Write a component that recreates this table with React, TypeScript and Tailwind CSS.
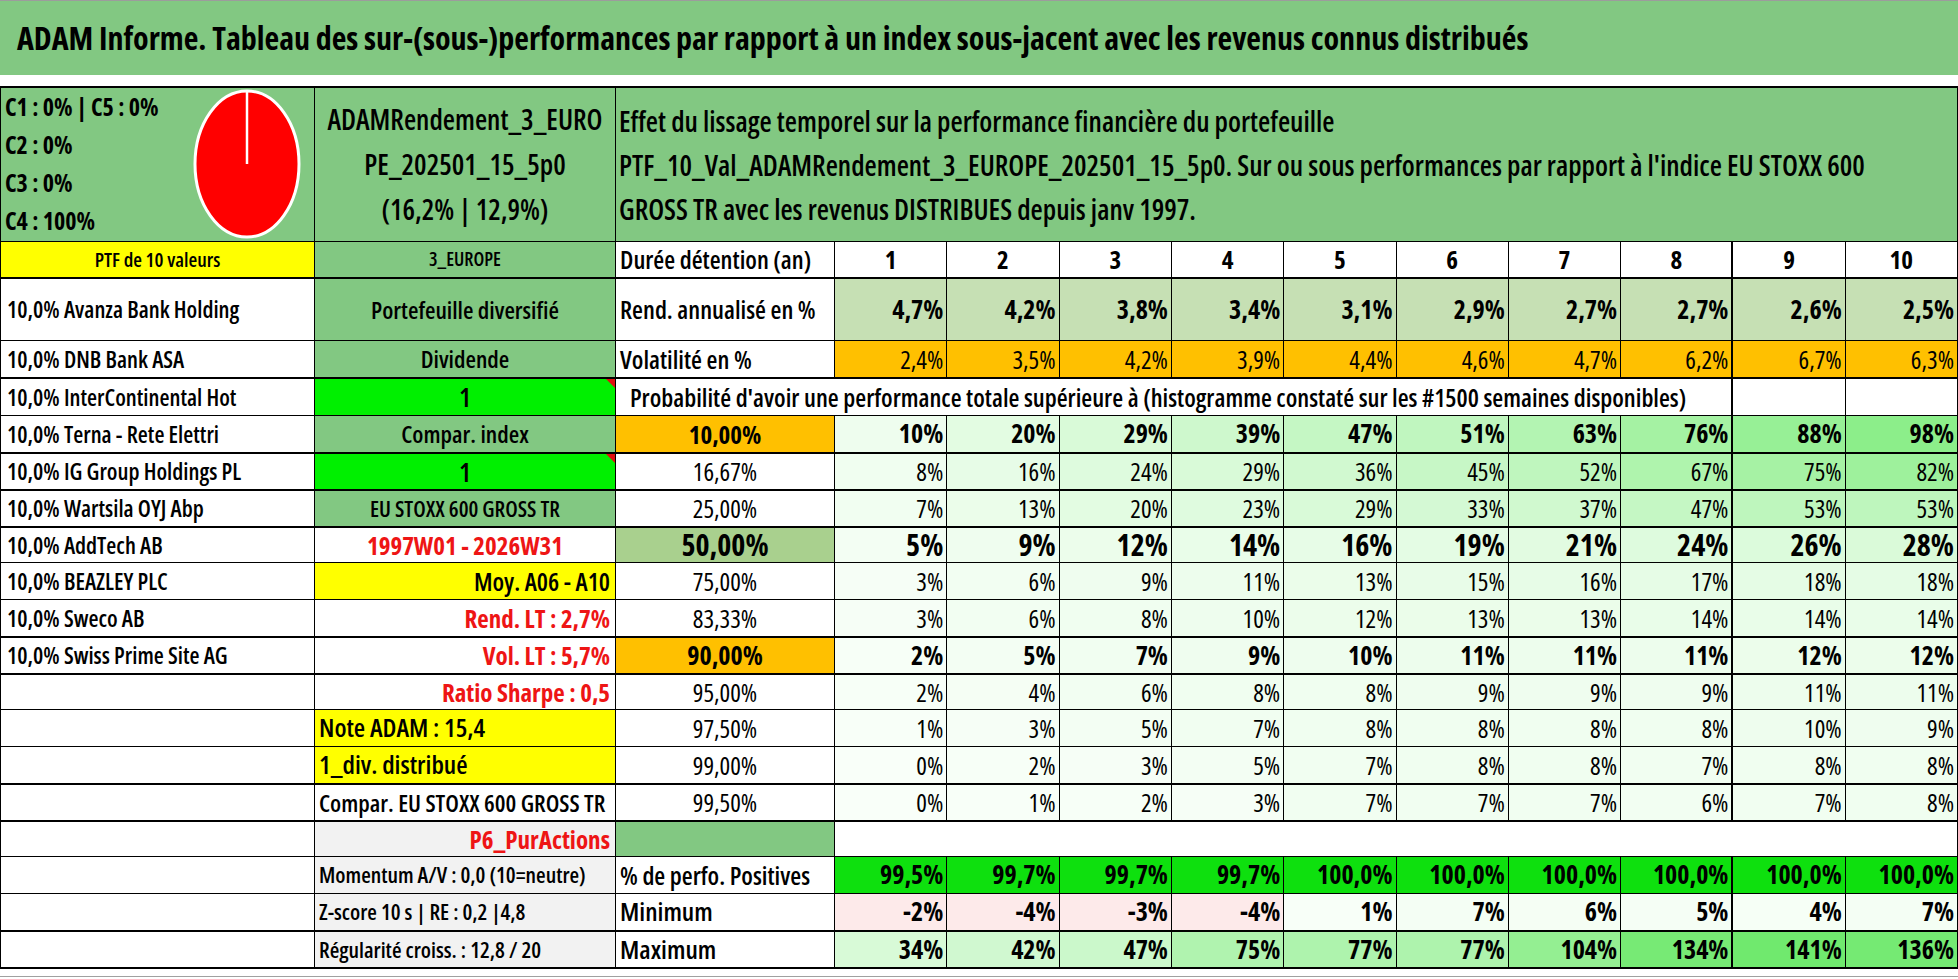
const COLS = "grid grid-cols-[314px_301px_219px_repeat(10,minmax(0,1fr))]";

const rend = ["4,7%", "4,2%", "3,8%", "3,4%", "3,1%", "2,9%", "2,7%", "2,7%", "2,6%", "2,5%"];
const vol = ["2,4%", "3,5%", "4,2%", "3,9%", "4,4%", "4,6%", "4,7%", "6,2%", "6,7%", "6,3%"];
const perfo = ["99,5%", "99,7%", "99,7%", "99,7%", "100,0%", "100,0%", "100,0%", "100,0%", "100,0%", "100,0%"];
const mini = [-2, -4, -3, -4, 1, 7, 6, 5, 4, 7];
const maxi = [34, 42, 47, 75, 77, 77, 104, 134, 141, 136];

type ProbRow = {
  name: string;
  b: React.ReactNode;
  bClass: string;
  p: string;
  pClass: string;
  vals: number[];
  valClass: string;
  rowClass: string;
};

const red = "text-[#ee1515] font-bold";

const probRows: ProbRow[] = [
  {
    name: "10,0% Terna - Rete Elettri",
    b: "Compar. index",
    bClass: "bg-[#82c882] justify-center text-[24px]",
    p: "10,00%",
    pClass: "bg-[#ffc000] font-bold text-[25px]",
    vals: [10, 20, 29, 39, 47, 51, 63, 76, 88, 98],
    valClass: "font-bold text-[26px]",
    rowClass: "h-[38px] border-b-2",
  },
  {
    name: "10,0% IG Group Holdings PL",
    b: "1",
    bClass: "bg-[#00f000] justify-center text-[27px] relative",
    p: "16,67%",
    pClass: "font-medium",
    vals: [8, 16, 24, 29, 36, 45, 52, 67, 75, 82],
    valClass: "text-[25px] font-medium",
    rowClass: "h-[37px] border-b-2",
  },
  {
    name: "10,0% Wartsila OYJ Abp",
    b: "EU STOXX 600 GROSS TR",
    bClass: "bg-[#82c882] justify-center text-[22px] [font-stretch:75%]",
    p: "25,00%",
    pClass: "font-medium",
    vals: [7, 13, 20, 23, 29, 33, 37, 47, 53, 53],
    valClass: "text-[25px] font-medium",
    rowClass: "h-[37px] border-b-2",
  },
  {
    name: "10,0% AddTech AB",
    b: "1997W01 - 2026W31",
    bClass: `justify-center text-[25px] ${red}`,
    p: "50,00%",
    pClass: "bg-[#a9d08e] font-bold text-[30px]",
    vals: [5, 9, 12, 14, 16, 19, 21, 24, 26, 28],
    valClass: "font-bold text-[30px]",
    rowClass: "h-[35px] border-b",
  },
  {
    name: "10,0% BEAZLEY PLC",
    b: "Moy. A06 - A10",
    bClass: "bg-[#ffff00] justify-end pr-[5px] text-[25px]",
    p: "75,00%",
    pClass: "font-medium",
    vals: [3, 6, 9, 11, 13, 15, 16, 17, 18, 18],
    valClass: "text-[25px] font-medium",
    rowClass: "h-[37px] border-b",
  },
  {
    name: "10,0% Sweco AB",
    b: "Rend. LT : 2,7%",
    bClass: `justify-end pr-[5px] text-[25px] ${red}`,
    p: "83,33%",
    pClass: "font-medium",
    vals: [3, 6, 8, 10, 12, 13, 13, 14, 14, 14],
    valClass: "text-[25px] font-medium",
    rowClass: "h-[38px] border-b-2",
  },
  {
    name: "10,0% Swiss Prime Site AG",
    b: "Vol. LT : 5,7%",
    bClass: `justify-end pr-[5px] text-[25px] ${red}`,
    p: "90,00%",
    pClass: "bg-[#ffc000] font-bold text-[26px]",
    vals: [2, 5, 7, 9, 10, 11, 11, 11, 12, 12],
    valClass: "font-bold text-[26px]",
    rowClass: "h-[37px] border-b-2",
  },
  {
    name: "",
    b: "Ratio Sharpe : 0,5",
    bClass: `justify-end pr-[5px] text-[25px] ${red}`,
    p: "95,00%",
    pClass: "font-medium",
    vals: [2, 4, 6, 8, 8, 9, 9, 9, 11, 11],
    valClass: "text-[25px] font-medium",
    rowClass: "h-[35px] border-b",
  },
  {
    name: "",
    b: "Note ADAM : 15,4",
    bClass: "bg-[#ffff00] pl-[4px] text-[26px]",
    p: "97,50%",
    pClass: "font-medium",
    vals: [1, 3, 5, 7, 8, 8, 8, 8, 10, 9],
    valClass: "text-[25px] font-medium",
    rowClass: "h-[37px] border-b",
  },
  {
    name: "",
    b: "1_div. distribué",
    bClass: "bg-[#ffff00] pl-[4px] text-[26px]",
    p: "99,00%",
    pClass: "font-medium",
    vals: [0, 2, 3, 5, 7, 8, 8, 7, 8, 8],
    valClass: "text-[25px] font-medium",
    rowClass: "h-[38px] border-b-2",
  },
  {
    name: "",
    b: "Compar. EU STOXX 600 GROSS TR",
    bClass: "pl-[4px] text-[24px]",
    p: "99,50%",
    pClass: "font-medium",
    vals: [0, 1, 2, 3, 7, 7, 7, 6, 7, 8],
    valClass: "text-[25px] font-medium",
    rowClass: "h-[37px] border-b-2",
  },
];

// white -> green colour scale, like the sheet's conditional format
function greenScale(v: number, max: number, hi = [138, 238, 136]) {
  const t = Math.max(0, Math.min(1, v / max));
  const lo = [249, 255, 249];
  const c = lo.map((l, i) => Math.round(l + (hi[i] - l) * t));
  return `rgb(${c[0]},${c[1]},${c[2]})`;
}

function Cell({ className = "", children }: { className?: string; children?: React.ReactNode }) {
  return (
    <div className={`flex items-center overflow-hidden whitespace-nowrap border-r border-black leading-[1.15] ${className}`}>
      {children}
    </div>
  );
}

function Num({
  i,
  center = false,
  className = "",
  bg,
  children,
}: {
  i: number;
  center?: boolean;
  className?: string;
  bg?: string;
  children?: React.ReactNode;
}) {
  return (
    <div
      className={`flex items-center overflow-hidden whitespace-nowrap border-black leading-[1.15] ${
        center ? "justify-center" : "justify-end pr-[3px]"
      } ${i === 7 ? "border-r-2" : "border-r"} ${className}`}
      style={bg ? { backgroundColor: bg } : undefined}
    >
      {children}
    </div>
  );
}

function Corner() {
  return (
    <span className="absolute right-0 top-0 h-0 w-0 border-l-[9px] border-t-[9px] border-l-transparent border-t-[#e01010]" />
  );
}

function Pie() {
  return (
    <svg width="110" height="152" viewBox="0 0 110 152" className="mr-[12px] shrink-0">
      <ellipse cx="55" cy="76" rx="52" ry="73" fill="#ff0000" stroke="#ffffff" strokeWidth="3" />
      <line x1="55" y1="3" x2="55" y2="76" stroke="#ffffff" strokeWidth="2.5" />
    </svg>
  );
}

export default function App() {
  return (
    <div className="h-[979px] w-[1958px] overflow-hidden border-t border-[#9c9c9c] bg-white font-['Open_Sans',sans-serif] font-semibold text-black [font-stretch:80%]">
      {/* title band */}
      <div className="flex h-[74px] items-center bg-[#82c882] pl-[17px] text-[32px] font-bold whitespace-nowrap">
        ADAM Informe. Tableau des sur-(sous-)performances par rapport à un index sous-jacent avec les revenus connus distribués
      </div>
      <div className="h-[11px]" />

      <div className="border-l border-t-2 border-black">
        {/* header block */}
        <div className={`${COLS} h-[154px] border-b border-black`}>
          <div className="flex items-start justify-between border-r border-black bg-[#82c882]">
            <div className="pl-[4px] text-[24px] font-bold leading-[38px] whitespace-nowrap [font-stretch:85%]">
              <div>C1 : 0% | C5 : 0%</div>
              <div>C2 : 0%</div>
              <div>C3 : 0%</div>
              <div>C4 : 100%</div>
            </div>
            <Pie />
          </div>
          <div className="flex flex-col items-center justify-center border-r border-black bg-[#82c882] text-[28px] leading-[45px] whitespace-nowrap">
            <div>ADAMRendement_3_EURO</div>
            <div>PE_202501_15_5p0</div>
            <div>(16,2% | 12,9%)</div>
          </div>
          <div className="col-span-11 flex flex-col justify-center border-r border-black bg-[#82c882] pl-[3px] text-[28px] leading-[44px] whitespace-nowrap">
            <div>Effet du lissage temporel sur la performance financière du portefeuille</div>
            <div>
              PTF_10_Val_ADAMRendement_3_EUROPE_202501_15_5p0. Sur ou sous performances par rapport à l'indice EU STOXX 600
            </div>
            <div>GROSS TR avec les revenus DISTRIBUES depuis janv 1997.</div>
          </div>
        </div>

        {/* PTF de 10 valeurs */}
        <div className={`${COLS} h-[37px] border-b-2 border-black`}>
          <Cell className="justify-center bg-[#ffff00] text-[20px]">PTF de 10 valeurs</Cell>
          <Cell className="justify-center bg-[#82c882] text-[19px]">3_EUROPE</Cell>
          <Cell className="pl-[4px] text-[25px]">Durée détention (an)</Cell>
          {Array.from({ length: 10 }, (_, i) => (
            <Num key={i} i={i} center className="text-[25px] font-bold">
              {i + 1}
            </Num>
          ))}
        </div>

        {/* rendement */}
        <div className={`${COLS} h-[62px] border-b border-black`}>
          <Cell className="pl-[6px] text-[23px]">10,0% Avanza Bank Holding</Cell>
          <Cell className="justify-center bg-[#82c882] text-[24px]">Portefeuille diversifié</Cell>
          <Cell className="pl-[4px] text-[25px]">Rend. annualisé en %</Cell>
          {rend.map((v, i) => (
            <Num key={i} i={i} className="bg-[#c6e0b4] text-[26px] font-bold">
              {v}
            </Num>
          ))}
        </div>

        {/* volatilite */}
        <div className={`${COLS} h-[38px] border-b-2 border-black`}>
          <Cell className="pl-[6px] text-[23px]">10,0% DNB Bank ASA</Cell>
          <Cell className="justify-center bg-[#82c882] text-[24px]">Dividende</Cell>
          <Cell className="pl-[4px] text-[25px]">Volatilité en %</Cell>
          {vol.map((v, i) => (
            <Num key={i} i={i} className="bg-[#ffc000] text-[25px] font-medium">
              {v}
            </Num>
          ))}
        </div>

        {/* probabilite title */}
        <div className={`${COLS} h-[37px] border-b border-black`}>
          <Cell className="pl-[6px] text-[23px]">10,0% InterContinental Hot</Cell>
          <Cell className="relative justify-center bg-[#00f000] text-[27px]">
            1
            <Corner />
          </Cell>
          <div className="col-span-9 flex items-center overflow-hidden whitespace-nowrap border-r-2 border-black pl-[14px] text-[25px] leading-[1.15]">
            Probabilité d'avoir une performance totale supérieure à (histogramme constaté sur les #1500 semaines disponibles)
          </div>
          <Cell />
          <Cell />
        </div>

        {probRows.map((r, ri) => (
          <div key={ri} className={`${COLS} ${r.rowClass} border-black`}>
            <Cell className="pl-[6px] text-[23px]">{r.name}</Cell>
            <Cell className={r.bClass}>
              {r.b}
              {r.b === "1" && <Corner />}
            </Cell>
            <Cell className={`justify-center text-[25px] ${r.pClass}`}>{r.p}</Cell>
            {r.vals.map((v, i) => (
              <Num key={i} i={i} className={r.valClass} bg={greenScale(v, 100)}>
                {v}%
              </Num>
            ))}
          </div>
        ))}

        {/* P6 */}
        <div className={`${COLS} h-[35px] border-b border-black`}>
          <Cell />
          <Cell className={`justify-end bg-[#f2f2f2] pr-[5px] text-[25px] ${red}`}>P6_PurActions</Cell>
          <Cell className="bg-[#82c882]" />
          <div className="col-span-10 border-r border-black" />
        </div>

        {/* % perfo positives */}
        <div className={`${COLS} h-[37px] border-b border-black`}>
          <Cell />
          <Cell className="bg-[#f2f2f2] pl-[4px] text-[22px]">Momentum A/V : 0,0 (10=neutre)</Cell>
          <Cell className="pl-[4px] text-[25px]">% de perfo. Positives</Cell>
          {perfo.map((v, i) => (
            <Num key={i} i={i} className="bg-[#0ee00e] text-[26px] font-bold">
              {v}
            </Num>
          ))}
        </div>

        {/* minimum */}
        <div className={`${COLS} h-[38px] border-b-2 border-black`}>
          <Cell />
          <Cell className="bg-[#f2f2f2] pl-[4px] text-[22px]">Z-score 10 s | RE : 0,2 |4,8</Cell>
          <Cell className="pl-[4px] text-[26px]">Minimum</Cell>
          {mini.map((v, i) => (
            <Num key={i} i={i} className="text-[26px] font-bold" bg={v < 0 ? "#fdeaea" : greenScale(v, 150)}>
              {v}%
            </Num>
          ))}
        </div>

        {/* maximum */}
        <div className={`${COLS} h-[37px] border-b-2 border-black`}>
          <Cell />
          <Cell className="bg-[#f2f2f2] pl-[4px] text-[22px]">Régularité croiss. : 12,8 / 20</Cell>
          <Cell className="pl-[4px] text-[26px]">Maximum</Cell>
          {maxi.map((v, i) => (
            <Num key={i} i={i} className="text-[26px] font-bold" bg={greenScale(v, 141, [112, 233, 110])}>
              {v}%
            </Num>
          ))}
        </div>
      </div>
      <div className="h-[8px] border-b border-[#a0a0a0]" />
    </div>
  );
}
